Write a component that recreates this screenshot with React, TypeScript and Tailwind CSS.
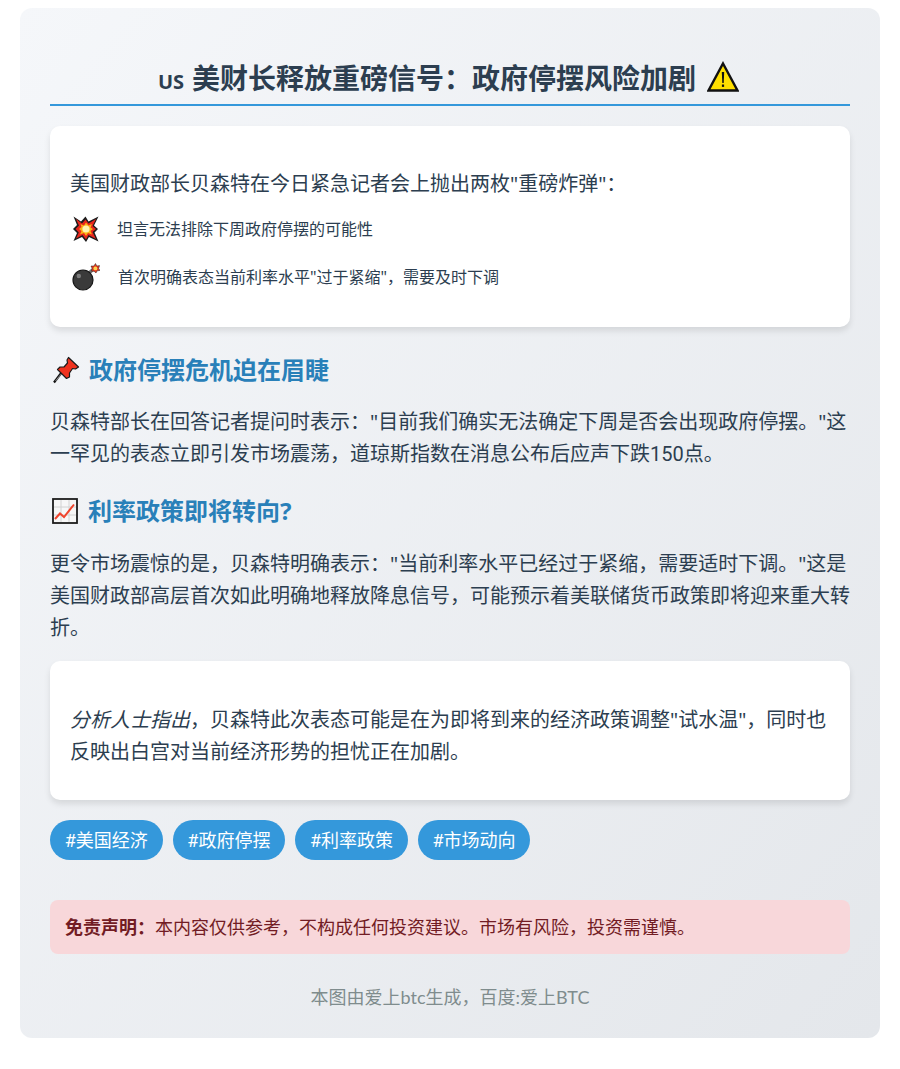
const WarningIcon = () => (
  <svg viewBox="0 0 32 32" className="mt-[3px] w-[32px] h-[32px]">
    <path d="M16 2.5 L30.5 29.5 H1.5 Z" fill="#ffdf00" stroke="#111" strokeWidth="2.4" strokeLinejoin="miter" />
    <path d="M14.8 11 h2.4 l-.5 11 h-1.4 Z" fill="#111" />
    <rect x="14.9" y="23.5" width="2.2" height="2.4" fill="#111" />
  </svg>
);

const CollisionIcon = () => (
  <svg viewBox="0 0 28 28" className="w-[28px] h-[28px]">
    <path d="M1.5 1.5 L9 6.5 L13.5 1.5 L16.5 6.5 L26.5 1.5 L22 10.5 L26 14 L22.5 17.5 L26.5 26.5 L17 22 L14 27 L10 22 L1.5 26 L5 18 L1 14 L5 10 Z" fill="#1c1c1c" />
    <path d="M4 4 L10 8.5 L13.5 4.5 L16.5 8.5 L24 4 L20.5 11 L24 14 L20.5 17 L24 24 L16.5 20 L14 24.5 L10.5 20 L4 23.5 L6.8 17.5 L3.5 14 L7 10.5 Z" fill="#e8261c" />
    <path d="M14 7.5 L16.5 10.5 L20 9 L18.5 12.5 L21 14 L18.5 16 L20 19.5 L16 18 L14 21 L12 18 L8 19.5 L9.5 16 L7 14 L9.5 12 L8.5 9 L12 10.5 Z" fill="#fbb116" />
    <circle cx="14" cy="14" r="3.6" fill="#fff4b0" />
  </svg>
);

const BombIcon = () => (
  <svg viewBox="0 0 28 28" className="w-[28px] h-[28px]">
    <path d="M17 10 L21 6.5" stroke="#777" strokeWidth="3.4" />
    <circle cx="11" cy="17" r="10" fill="#3a3a3a" stroke="#161616" strokeWidth="1.2" />
    <circle cx="6.8" cy="13" r="2.2" fill="#7c7c7c" />
    <path d="M23.5 0.5 L24.8 3 L27.6 2.6 L26.6 5.4 L28 7.4 L25.2 7.8 L24 10 L22 8.2 L19.4 8.2 L20.2 5.4 L19 3 L21.8 3 Z" fill="#e5391f" stroke="#222" strokeWidth="0.5" />
    <circle cx="23.4" cy="5.4" r="1.9" fill="#fcd34d" />
  </svg>
);

const PinIcon = () => (
  <svg viewBox="0 0 28 28" className="w-[28px] h-[28px]">
    <path d="M2 26.5 L10 16" stroke="#111" strokeWidth="2.2" />
    <path d="M3.5 25 L10 17" stroke="#bbb" strokeWidth="0.7" />
    <path d="M16.5 1.5 L26.5 11 L23.5 13 L20.5 12.5 L17.5 17 L17.5 21 L14.5 22.5 L5.5 13.5 L8 11 L12 11 L15.5 7 L15 4 Z" fill="#f0321e" stroke="#1a1a1a" strokeWidth="1.2" strokeLinejoin="round" />
  </svg>
);

const ChartIcon = () => (
  <svg viewBox="0 0 26 26" className="w-[26px] h-[26px]">
    <rect x="1" y="1" width="24" height="24" fill="#f7f7f7" stroke="#1c1c1c" strokeWidth="1.8" />
    <path d="M9 2 V24 M17 2 V24 M2 9 H24 M2 17 H24" stroke="#d2d2d2" strokeWidth="1" />
    <path d="M3 21 L8 15.5 L12 19 L22 6.5" fill="none" stroke="#f0442c" strokeWidth="2" />
  </svg>
);

export default function App() {
  return (
    <div className="bg-white px-5 pt-2 pb-[31px] text-[#2c3e50] font-['Noto_Sans','Noto_Sans_CJK_SC',sans-serif]">
      <div className="rounded-xl bg-gradient-to-br from-[#f5f7fa] to-[#e4e7eb] px-[30px] pt-[30px] pb-[25px]">
        <h1 className="flex items-start justify-center gap-[11px] h-[68px] pt-[20px] pr-[3px] border-b-2 border-[#3498db] text-[28px] leading-[40px] font-bold">
          <span>
            <span className="text-[20px] mr-[8px]">US</span>美财长释放重磅信号：政府停摆风险加剧
          </span>
          <WarningIcon />
        </h1>

        <section className="mt-[20px] rounded-[10px] bg-white px-5 pt-[42px] pb-[36px] shadow-[0_4px_6px_rgba(0,0,0,0.1)]">
          <p className="text-[20px] leading-[32px]">美国财政部长贝森特在今日紧急记者会上抛出两枚"重磅炸弹"：</p>
          <ul className="mt-[15px] flex flex-col gap-[20px] text-[16px] leading-[28px]">
            <li className="flex items-center gap-[17px] pl-[2px]">
              <CollisionIcon />
              <span>坦言无法排除下周政府停摆的可能性</span>
            </li>
            <li className="flex items-center gap-[18px] pl-[2px]">
              <BombIcon />
              <span>首次明确表态当前利率水平"过于紧缩"，需要及时下调</span>
            </li>
          </ul>
        </section>

        <h2 className="mt-[24px] flex items-center gap-[9px] pl-[2px] text-[24px] leading-[38px] font-bold text-[#2980b9]">
          <PinIcon />
          <span>政府停摆危机迫在眉睫</span>
        </h2>
        <p className="mt-[17px] text-[20px] leading-[32px]">
          贝森特部长在回答记者提问时表示："目前我们确实无法确定下周是否会出现政府停摆。"这一罕见的表态立即引发市场震荡，道琼斯指数在消息公布后应声下跌<span className="font-['Roboto']">150</span>点。
        </p>

        <h2 className="mt-[22px] flex items-center gap-[10px] pl-[2px] text-[24px] leading-[38px] font-bold text-[#2980b9]">
          <ChartIcon />
          <span>利率政策即将转向?</span>
        </h2>
        <p className="mt-[18px] text-[20px] leading-[32px]">
          更令市场震惊的是，贝森特明确表示："当前利率水平已经过于紧缩，需要适时下调。"这是美国财政部高层首次如此明确地释放降息信号，可能预示着美联储货币政策即将迎来重大转折。
        </p>

        <section className="mt-[17px] rounded-[10px] bg-white px-5 pt-[43px] pb-[32px] shadow-[0_4px_6px_rgba(0,0,0,0.1)]">
          <p className="text-[20px] leading-[32px]">
            <em>分析人士指出</em>，贝森特此次表态可能是在为即将到来的经济政策调整"试水温"，同时也反映出白宫对当前经济形势的担忧正在加剧。
          </p>
        </section>

        <div className="mt-[20px] flex gap-[10px]">
          {["#美国经济", "#政府停摆", "#利率政策", "#市场动向"].map((tag) => (
            <span key={tag} className="rounded-full bg-[#3498db] px-[14.75px] h-[40px] flex items-center font-['Roboto','Noto_Sans_CJK_SC',sans-serif] text-[18px] text-white">
              {tag}
            </span>
          ))}
        </div>

        <div className="mt-[40px] rounded-[8px] bg-[#f8d7da] px-[15px] h-[54px] flex items-center text-[18px] text-[#721c24]">
          <strong>免责声明：</strong>
          <span>本内容仅供参考，不构成任何投资建议。市场有风险，投资需谨慎。</span>
        </div>

        <p className="mt-[27px] text-center font-['Lato','Noto_Sans_CJK_SC',sans-serif] text-[18px] leading-[32px] text-[#7f8c8d]">本图由爱上btc生成，百度:爱上BTC</p>
      </div>
    </div>
  );
}
